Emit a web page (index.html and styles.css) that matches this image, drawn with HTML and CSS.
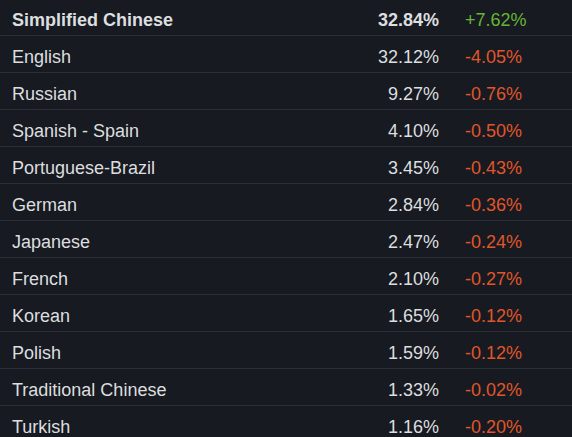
FILE: index.html
```html
<!DOCTYPE html>
<html>
<head>
<meta charset="utf-8">
<link rel="stylesheet" href="styles.css">
</head>
<body>
<div class="table">
  <div class="row top"><span class="lang">Simplified Chinese</span><span class="pct">32.84%</span><span class="chg up">+7.62%</span></div>
  <div class="row"><span class="lang">English</span><span class="pct">32.12%</span><span class="chg down">-4.05%</span></div>
  <div class="row"><span class="lang">Russian</span><span class="pct">9.27%</span><span class="chg down">-0.76%</span></div>
  <div class="row"><span class="lang">Spanish - Spain</span><span class="pct">4.10%</span><span class="chg down">-0.50%</span></div>
  <div class="row"><span class="lang">Portuguese-Brazil</span><span class="pct">3.45%</span><span class="chg down">-0.43%</span></div>
  <div class="row"><span class="lang">German</span><span class="pct">2.84%</span><span class="chg down">-0.36%</span></div>
  <div class="row"><span class="lang">Japanese</span><span class="pct">2.47%</span><span class="chg down">-0.24%</span></div>
  <div class="row"><span class="lang">French</span><span class="pct">2.10%</span><span class="chg down">-0.27%</span></div>
  <div class="row"><span class="lang">Korean</span><span class="pct">1.65%</span><span class="chg down">-0.12%</span></div>
  <div class="row"><span class="lang">Polish</span><span class="pct">1.59%</span><span class="chg down">-0.12%</span></div>
  <div class="row"><span class="lang">Traditional Chinese</span><span class="pct">1.33%</span><span class="chg down">-0.02%</span></div>
  <div class="row"><span class="lang">Turkish</span><span class="pct">1.16%</span><span class="chg down">-0.20%</span></div>
</div>
</body>
</html>
```

FILE: styles.css
```css
html, body {
  margin: 0;
  padding: 0;
  background: #171a21;
  overflow: hidden;
}
body {
  font-family: "Liberation Sans", Arial, sans-serif;
  font-size: 18px;
  color: #dcdedf;
}
.table {
  margin-top: -1px;
}
.row {
  display: flex;
  align-items: center;
  box-sizing: border-box;
  height: 37px;
  padding-top: 6px;
  border-bottom: 1px solid #2a2e36;
}
.lang {
  flex: 1;
  padding-left: 12px;
}
.pct {
  width: 100px;
  text-align: right;
}
.chg {
  width: 107px;
  padding-left: 26px;
}
.top .lang, .top .pct {
  font-weight: bold;
}
.up { color: #66b534; }
.down { color: #e0562a; }
```
